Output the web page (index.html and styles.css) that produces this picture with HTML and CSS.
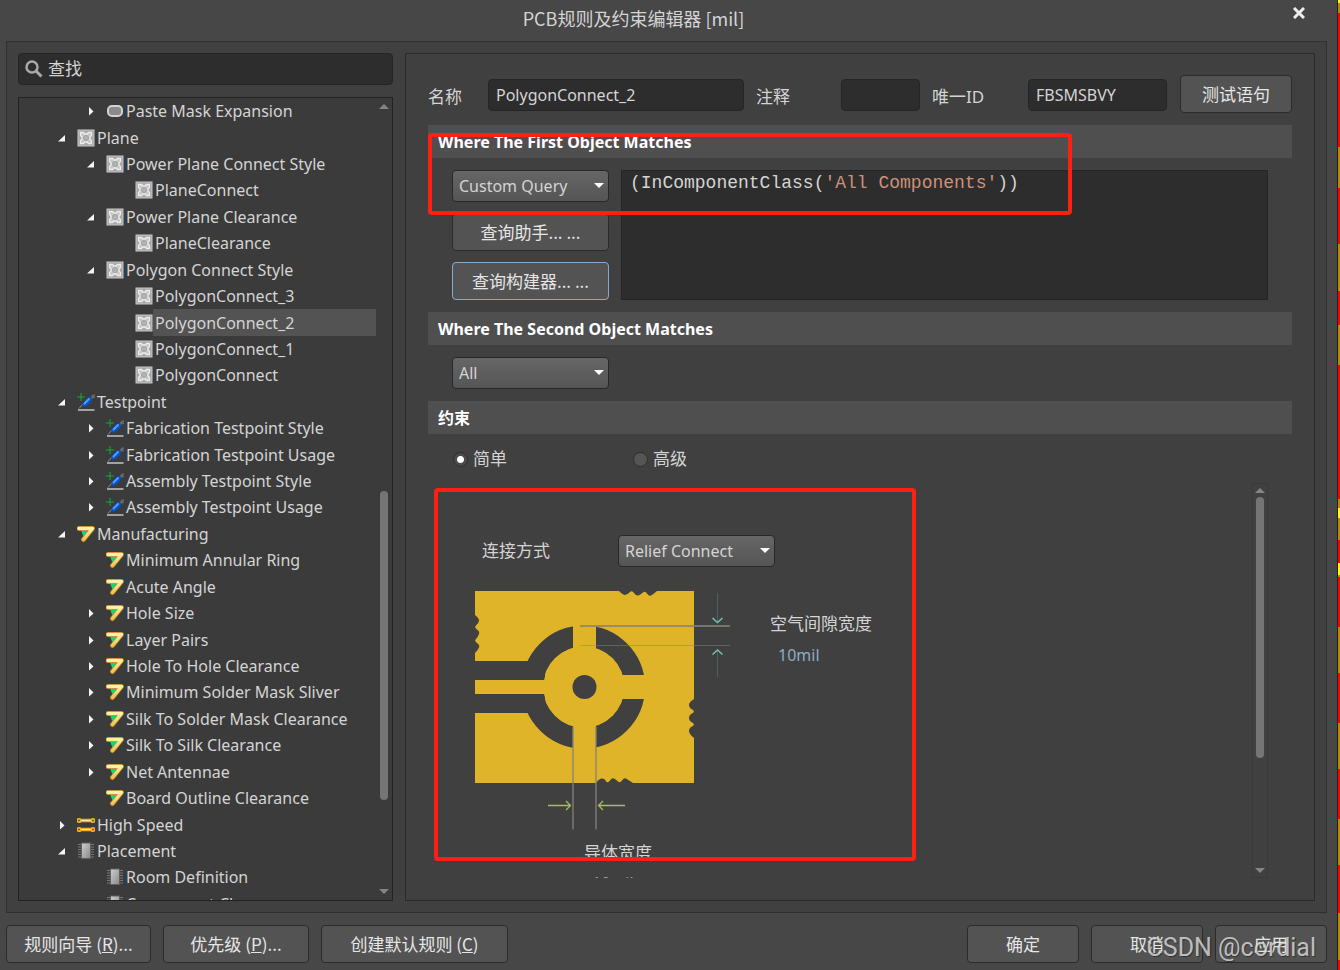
FILE: index.html
```
<!DOCTYPE html>
<html lang="zh-CN">
<head>
    <meta charset="UTF-8">
    <meta name="viewport" content="width=device-width, initial-scale=1.0">
    <title>PCB规则及约束编辑器 [mil]</title>

    <link rel="stylesheet" href="styles.css">
</head>
<body>
    <!-- Icon definitions -->
    <svg class="icon-defs" aria-hidden="true">
        <defs>
            <linearGradient id="chipFill" x1="0" y1="0" x2="1" y2="1">
                <stop offset="0" stop-color="#d0d0d0"/>
                <stop offset="1" stop-color="#888"/>
            </linearGradient>
            <linearGradient id="goldFill" x1="0" y1="0" x2="0" y2="1">
                <stop offset="0" stop-color="#fff2a8"/>
                <stop offset="1" stop-color="#efc558"/>
            </linearGradient>
        </defs>
        <symbol id="i-open" viewBox="0 0 12 12"><path d="M9 3v6.500H2z" fill="#f4f4f4"/></symbol>
        <symbol id="i-closed" viewBox="0 0 12 12"><path d="M4 2l4.500 4.500L4 10.500z" fill="#f4f4f4"/></symbol>
        <symbol id="i-mask" viewBox="0 0 18 18">
            <rect x="2" y="4" width="14" height="10" rx="4" fill="#8a8a8a" stroke="#d2d2d2" stroke-width="2"/>
        </symbol>
        <symbol id="i-plane" viewBox="0 0 18 18">
            <rect x="1" y="1" width="16" height="16" fill="#a8a8a8" stroke="#c8c8c8"/>
            <path d="M3.500 6.500v-3h3L8 5h2l1.500-1.500h3v3L13 8v2l1.500 1.500v3h-3L10 13H8l-1.500 1.500h-3v-3L5 10V8z" fill="#c8c8c8" stroke="#ececec" stroke-width="1.300"/>
            <circle cx="9" cy="9" r="2.500" fill="#b4b4b4" stroke="#a0a0a0"/>
        </symbol>
        <symbol id="i-test" viewBox="0 0 18 18">
            <path d="M14 5l2-2.500 2-.5M15 5l3-1" stroke="#6b6b6b" stroke-width="1.500" fill="none"/>
            <path d="M2 15.500L6 11" stroke="#8f8f8f"/>
            <path d="M5.500 10.500L10.500 5q3-2 4.500 0 .5 2-1.500 4.500l-4 3.500q-3 1-4.500 0z" fill="#0a50c8"/>
            <path d="M7.500 10.500l4.500-4.500" stroke="#48a4ff" stroke-width="2" stroke-linecap="round"/>
            <path d="M4 0v8M0 4h8" stroke="#12ab35" stroke-width="1"/>
            <path d="M1 17h16.500" stroke="#c6c6c6" stroke-width="1.500"/>
        </symbol>
        <symbol id="i-mfg" viewBox="0 0 18 18">
            <path d="M4 5h9l-6.500 7z" fill="#12d873"/>
            <path d="M2 3.500H15.500L6.500 14.500" fill="none" stroke="#b97a1e" stroke-width="5" stroke-linecap="round" stroke-linejoin="round"/>
            <path d="M2 3.500H15.500L6.500 14.500" fill="none" stroke="url(#goldFill)" stroke-width="3.500" stroke-linecap="round" stroke-linejoin="round"/>
            <path d="M5 6h5.500L7 10.500z" fill="#12d873"/>
        </symbol>
        <symbol id="i-speed" viewBox="0 0 18 18">
            <path d="M3 4.500h12M3 13.500h12" stroke="#f0ae22" stroke-width="3.500"/>
            <path d="M3 4.500h12M3 13.500h12" stroke="#ffe994" stroke-width="1"/>
            <g fill="#8a5b0b" stroke="#f5b62d" stroke-width="1.500">
                <circle cx="2" cy="4.500" r="1.800"/><circle cx="16" cy="4.500" r="1.800"/>
                <circle cx="2" cy="13.500" r="1.800"/><circle cx="16" cy="13.500" r="1.800"/>
            </g>
        </symbol>
        <symbol id="i-chip" viewBox="0 0 18 18">
            <path d="M1 2.500h16M1 5h16M1 7.500h16M1 10h16M1 12.500h16M1 15h16" stroke="#777"/>
            <rect x="4.500" y="1" width="9" height="15.500" fill="url(#chipFill)" stroke="#606060"/>
        </symbol>
    </svg>

    <div class="dialog">
        <header class="titlebar">
            <h1>PCB规则及约束编辑器 [mil]</h1>
            <button class="close-btn" aria-label="关闭">
                <svg width="12" height="12" viewBox="0 0 12 12"><path d="M1 1l10 10M11 1L1 11" stroke="#eee" stroke-width="3"/></svg>
            </button>
        </header>

        <main class="frame">
            <aside class="sidebar">
                <label class="search">
                    <svg width="18" height="18" viewBox="0 0 18 18"><circle cx="7" cy="7" r="5.500" fill="none" stroke="#a9a9a9" stroke-width="2.500"/><path d="M11 11l5.500 5.500" stroke="#a9a9a9" stroke-width="3"/></svg>
                    <input type="text" placeholder="查找" aria-label="查找">
                </label>

                <div class="tree">
                    <ul class="tree-list">
                        <li class="level-2"><svg class="arrow"><use href="#i-closed"/></svg><svg class="icon"><use href="#i-mask"/></svg><span>Paste Mask Expansion</span></li>
                        <li class="level-1"><svg class="arrow"><use href="#i-open"/></svg><svg class="icon"><use href="#i-plane"/></svg><span>Plane</span></li>
                        <li class="level-2"><svg class="arrow"><use href="#i-open"/></svg><svg class="icon"><use href="#i-plane"/></svg><span>Power Plane Connect Style</span></li>
                        <li class="level-3"><svg class="arrow"></svg><svg class="icon"><use href="#i-plane"/></svg><span>PlaneConnect</span></li>
                        <li class="level-2"><svg class="arrow"><use href="#i-open"/></svg><svg class="icon"><use href="#i-plane"/></svg><span>Power Plane Clearance</span></li>
                        <li class="level-3"><svg class="arrow"></svg><svg class="icon"><use href="#i-plane"/></svg><span>PlaneClearance</span></li>
                        <li class="level-2"><svg class="arrow"><use href="#i-open"/></svg><svg class="icon"><use href="#i-plane"/></svg><span>Polygon Connect Style</span></li>
                        <li class="level-3"><svg class="arrow"></svg><svg class="icon"><use href="#i-plane"/></svg><span>PolygonConnect_3</span></li>
                        <li class="level-3 selected"><svg class="arrow"></svg><svg class="icon"><use href="#i-plane"/></svg><span>PolygonConnect_2</span></li>
                        <li class="level-3"><svg class="arrow"></svg><svg class="icon"><use href="#i-plane"/></svg><span>PolygonConnect_1</span></li>
                        <li class="level-3"><svg class="arrow"></svg><svg class="icon"><use href="#i-plane"/></svg><span>PolygonConnect</span></li>
                        <li class="level-1"><svg class="arrow"><use href="#i-open"/></svg><svg class="icon"><use href="#i-test"/></svg><span>Testpoint</span></li>
                        <li class="level-2"><svg class="arrow"><use href="#i-closed"/></svg><svg class="icon"><use href="#i-test"/></svg><span>Fabrication Testpoint Style</span></li>
                        <li class="level-2"><svg class="arrow"><use href="#i-closed"/></svg><svg class="icon"><use href="#i-test"/></svg><span>Fabrication Testpoint Usage</span></li>
                        <li class="level-2"><svg class="arrow"><use href="#i-closed"/></svg><svg class="icon"><use href="#i-test"/></svg><span>Assembly Testpoint Style</span></li>
                        <li class="level-2"><svg class="arrow"><use href="#i-closed"/></svg><svg class="icon"><use href="#i-test"/></svg><span>Assembly Testpoint Usage</span></li>
                        <li class="level-1"><svg class="arrow"><use href="#i-open"/></svg><svg class="icon"><use href="#i-mfg"/></svg><span>Manufacturing</span></li>
                        <li class="level-2"><svg class="arrow"></svg><svg class="icon"><use href="#i-mfg"/></svg><span>Minimum Annular Ring</span></li>
                        <li class="level-2"><svg class="arrow"></svg><svg class="icon"><use href="#i-mfg"/></svg><span>Acute Angle</span></li>
                        <li class="level-2"><svg class="arrow"><use href="#i-closed"/></svg><svg class="icon"><use href="#i-mfg"/></svg><span>Hole Size</span></li>
                        <li class="level-2"><svg class="arrow"><use href="#i-closed"/></svg><svg class="icon"><use href="#i-mfg"/></svg><span>Layer Pairs</span></li>
                        <li class="level-2"><svg class="arrow"><use href="#i-closed"/></svg><svg class="icon"><use href="#i-mfg"/></svg><span>Hole To Hole Clearance</span></li>
                        <li class="level-2"><svg class="arrow"><use href="#i-closed"/></svg><svg class="icon"><use href="#i-mfg"/></svg><span>Minimum Solder Mask Sliver</span></li>
                        <li class="level-2"><svg class="arrow"><use href="#i-closed"/></svg><svg class="icon"><use href="#i-mfg"/></svg><span>Silk To Solder Mask Clearance</span></li>
                        <li class="level-2"><svg class="arrow"><use href="#i-closed"/></svg><svg class="icon"><use href="#i-mfg"/></svg><span>Silk To Silk Clearance</span></li>
                        <li class="level-2"><svg class="arrow"><use href="#i-closed"/></svg><svg class="icon"><use href="#i-mfg"/></svg><span>Net Antennae</span></li>
                        <li class="level-2"><svg class="arrow"></svg><svg class="icon"><use href="#i-mfg"/></svg><span>Board Outline Clearance</span></li>
                        <li class="level-1"><svg class="arrow"><use href="#i-closed"/></svg><svg class="icon"><use href="#i-speed"/></svg><span>High Speed</span></li>
                        <li class="level-1"><svg class="arrow"><use href="#i-open"/></svg><svg class="icon"><use href="#i-chip"/></svg><span>Placement</span></li>
                        <li class="level-2"><svg class="arrow"></svg><svg class="icon"><use href="#i-chip"/></svg><span>Room Definition</span></li>
                        <li class="level-2"><svg class="arrow"></svg><svg class="icon"><use href="#i-chip"/></svg><span>Component Clearance</span></li>
                    </ul>
                    <div class="scrollbar">
                        <i class="scroll-up"></i>
                        <div class="track"><div class="thumb" style="top: 49%; height: 40%"></div></div>
                        <i class="scroll-down"></i>
                    </div>
                </div>
            </aside>

            <section class="editor">
                <div class="name-row">
                    <label class="name-label" for="ruleName">名称</label>
                    <input class="field name-field" id="ruleName" type="text" value="PolygonConnect_2">
                    <label class="comment-label" for="comment">注释</label>
                    <input class="field comment-field" id="comment" type="text">
                    <label class="id-label" for="uniqueId">唯一ID</label>
                    <input class="field id-field" id="uniqueId" type="text" value="FBSMSBVY">
                    <button class="btn test-btn">测试语句</button>
                </div>

                <h2>Where The First Object Matches</h2>
                <div class="query-row">
                    <div class="query-buttons">
                        <div class="select">
                            <select aria-label="First object scope"><option>Custom Query</option><option>All</option></select>
                        </div>
                        <button class="btn">查询助手... ...</button>
                        <button class="btn focused">查询构建器... ...</button>
                    </div>
                    <div class="query-text" contenteditable="true" role="textbox" aria-label="Query" spellcheck="false">(InComponentClass(<span class="string">'All Components'</span>))</div>
                </div>

                <h2>Where The Second Object Matches</h2>
                <div class="query-row">
                    <div class="select">
                        <select aria-label="Second object scope"><option>All</option><option>Custom Query</option></select>
                    </div>
                </div>

                <h2>约束</h2>
                <div class="mode-row">
                    <label><input type="radio" name="mode" checked>简单</label>
                    <label><input type="radio" name="mode">高级</label>
                </div>

                <div class="constraints">
                    <div class="constraints-body">
                        <div class="connect-row">
                            <label for="connectStyle">连接方式</label>
                            <div class="select">
                                <select id="connectStyle"><option>Relief Connect</option><option>Direct Connect</option><option>No Connect</option></select>
                            </div>
                        </div>
                        <div class="diagram-row">
                            <svg width="256" height="240" viewBox="0 0 256 240">
                                <rect width="219" height="192" fill="#e0b429"/>
                                <!-- air gap -->
                                <circle cx="108.500" cy="96" r="51" fill="none" stroke="#404040" stroke-width="21"/>
                                <path d="M0 70h70v19H0zM0 103h70v19H0z" fill="#404040"/>
                                <!-- conductors -->
                                <circle cx="109" cy="96" r="40.500" fill="#e0b429"/>
                                <path d="M98 30h23v136H98zM110 84h65v24h-65zM0 89h75v14H0z" fill="#e0b429"/>
                                <circle cx="109.500" cy="96" r="12" fill="#404040"/>
                                <!-- broken edges -->
                                <g fill="#404040">
                                    <path d="M144 0q4 4 6 4t5-3q2-2 4 1t4 2.500 5-3q2-2 4 1t4 2 6-4.500z"/>
                                    <path d="M0 24q4 3 4 5.500t-3 5q-2 2 1 4t2 4.500-3 5q-2 2 1 4t2 4.500T0 62z"/>
                                    <path d="M219 108q-5 3-5 6t4 5q2 2-1 3.500t-3 4.500 4 5q2 2-1 3.500t-3 4.500 5 7z"/>
                                    <path d="M121 192q3-4.500 6-4.500t4 3q2 2 4-1t4-2 4 3q2 2 4-1t4-2 7 4.500z"/>
                                </g>
                                <!-- dimension lines -->
                                <path d="M105 35h150" stroke="#85827a" stroke-width="2" opacity=".8"/>
                                <path d="M105 54.500h150" stroke="#85827a" opacity=".5"/>
                                <path d="M98 136v102.500M121 136v102.500" stroke="#85827a" stroke-width="1.300"/>
                                <path d="M242.500 2v29M242.500 60v26" stroke="#4d605c"/>
                                <path d="M237.500 27l5 4.500 5-4.500M237.500 63.500l5-4.500 5 4.500" fill="none" stroke="#6fc2b4" stroke-width="1.500"/>
                                <path d="M73 214.500h22M91 210l4.500 4.500L91 219M124 214.500h26M128 210l-4.500 4.500L128 219" fill="none" stroke="#a2bd62" stroke-width="1.300"/>
                            </svg>
                            <div class="dimension gap-dimension">
                                <label for="airGap">空气间隙宽度</label>
                                <input id="airGap" type="text" value="10mil">
                            </div>
                        </div>
                        <div class="dimension width-dimension">
                            <label for="conductor">导体宽度</label>
                            <input id="conductor" type="text" value="10mil">
                        </div>
                    </div>
                    <div class="scrollbar framed">
                        <i class="scroll-up"></i>
                        <div class="track"><div class="thumb" style="top: 0; height: 71%"></div></div>
                        <i class="scroll-down"></i>
                    </div>
                </div>

                <div class="mark mark-query"></div>
                <div class="mark mark-connect"></div>
            </section>
        </main>

        <footer class="actions">
            <button class="btn wizard-btn">规则向导 (<u>R</u>)...</button>
            <button class="btn priority-btn">优先级 (<u>P</u>)...</button>
            <button class="btn defaults-btn">创建默认规则 (<u>C</u>)</button>
            <button class="btn ok-btn">确定</button>
            <button class="btn">取消</button>
            <button class="btn">应用</button>
        </footer>
        <div class="watermark">CSDN @cordial</div>
    </div>
    <div class="board-edge"></div>
</body>
</html>
```
FILE: styles.css
```
* {
    box-sizing: border-box;
}

body {
    margin: 0;
    height: 100vh;
    display: flex;
    overflow: hidden;
    background: #474747;
    color: #d4d4d4;
    font-family: "Noto Sans", "Noto Sans CJK SC", sans-serif;
    font-size: 16px;
    line-height: 24px;
}

button, input, select {
    font-family: inherit;
    font-size: inherit;
    line-height: inherit;
    color: inherit;
}

.icon-defs {
    position: absolute;
    width: 0;
    height: 0;
}

.dialog {
    position: relative;
    flex: 1;
    min-width: 0;
    display: flex;
    flex-direction: column;
    border-right: 1px solid #222;
}

/* Slice of the PCB canvas next to the dialog */
.board-edge {
    width: 2px;
    background: linear-gradient(#ff0 0 3px, #b98700 3px 13px, #f00 13px 147px, #b98700 147px 188px,
        #f00 188px 244px, #b98700 244px 291px, #f00 291px 325px, #b98700 325px 365px,
        #f00 365px 499px, #b98700 499px 508px, #ff0 508px 518px, #b98700 518px 540px,
        #f00 540px 563px, #ff0 563px 575px, #b98700 575px 577px, #f00 577px 627px,
        #b98700 627px 673px, #f00 673px 723px, #b98700 723px 769px, #f00 769px 819px,
        #b98700 819px 865px, #f00 865px 913px, #b98700 913px 960px, #f00 960px);
}

.titlebar {
    display: flex;
    height: 41px;
}

.titlebar h1 {
    flex: 1;
    margin: 0;
    padding-top: 6px;
    text-align: center;
    font-family: "Noto Sans CJK SC", sans-serif;
    font-size: 18px;
    font-weight: 400;
}

.close-btn {
    width: 64px;
    height: 25px;
    margin-right: 6px;
    padding: 0;
    border: none;
    background: none;
    cursor: pointer;
}

.close-btn svg {
    display: block;
    margin: 0 auto;
}

.frame {
    flex: 1;
    min-height: 0;
    display: flex;
    gap: 12px;
    margin: 0 10px 0 6px;
    padding: 11px;
    border: 1px solid #303030;
    background: #404040;
}

/* Sidebar */
.sidebar {
    width: 375px;
    display: flex;
    flex-direction: column;
    gap: 12px;
}

.search {
    display: flex;
    align-items: center;
    gap: 5px;
    height: 32px;
    padding: 0 6px;
    border: 1px solid #252525;
    border-radius: 4px;
    background: #2d2d2d;
}

.search input {
    flex: 1;
    padding: 0;
    border: none;
    outline: none;
    background: none;
    font-size: 17px;
}

.search input::placeholder {
    color: #d4d4d4;
    opacity: 1;
}

.tree {
    flex: 1;
    min-height: 0;
    display: flex;
    overflow: hidden;
    border: 1px solid #222;
    background: #3b3b3b;
}

/* the last row runs under the bottom edge */
.tree-list {
    flex: 1;
    display: grid;
    grid-auto-rows: 1fr;
    margin: 0 0 -17px;
    padding: 0;
    list-style: none;
}

.tree-list li {
    display: flex;
    align-items: center;
    font-size: 16px;
    white-space: nowrap;
}

.tree-list span {
    flex: 1;
    padding-left: 2px;
}

.level-1 {
    padding-left: 37px;
}

.level-2 {
    padding-left: 66px;
}

.level-3 {
    padding-left: 95px;
}

.tree-list .selected span {
    align-self: stretch;
    display: flex;
    align-items: center;
    background: #535353;
}

.arrow {
    width: 12px;
    height: 12px;
    margin-right: 9px;
}

.icon {
    width: 18px;
    height: 18px;
}

.scrollbar {
    width: 16px;
    display: flex;
    flex-direction: column;
    align-items: center;
    gap: 4px;
    padding: 6px 0;
}

.scrollbar.framed {
    border: 1px solid #3a3a3a;
    padding: 4px 0;
}

.scroll-up, .scroll-down {
    border: 5px solid transparent;
}

.scroll-up {
    border-top: none;
    border-bottom-color: #858585;
}

.scroll-down {
    border-bottom: none;
    border-top-color: #858585;
}

.track {
    position: relative;
    flex: 1;
    width: 8px;
}

.thumb {
    position: absolute;
    width: 100%;
    border-radius: 4px;
    background: #757575;
}

/* Editor */
.editor {
    position: relative;
    flex: 1;
    min-width: 0;
    display: flex;
    flex-direction: column;
    padding: 21px 22px 22px;
    border: 1px solid #2a2a2a;
}

.name-row {
    display: flex;
    align-items: center;
    height: 40px;
    margin-bottom: 10px;
    font-size: 17px;
}

.name-row label {
    padding-top: 4px;
}

.name-label {
    width: 60px;
}

.comment-label {
    width: 97px;
    padding-left: 12px;
}

.id-label {
    width: 108px;
    padding-left: 12px;
}

.field {
    height: 32px;
    padding: 0 7px;
    border: 1px solid #252525;
    border-radius: 4px;
    background: #2d2d2d;
    font-size: 16px;
}

.name-field {
    flex: 1;
    min-width: 0;
}

.comment-field {
    width: 79px;
}

.id-field {
    width: 139px;
}

.btn {
    height: 38px;
    padding: 0;
    border: 1px solid #2b2b2b;
    border-radius: 4px;
    background: #535353;
    color: #e6e6e6;
    font-family: "Noto Sans CJK SC", sans-serif;
    font-size: 17px;
    cursor: pointer;
}

.btn.focused {
    border-color: #86aace;
}

.test-btn {
    align-self: flex-start;
    width: 112px;
    margin-left: 13px;
}

h2 {
    margin: 0;
    padding: 5px 10px 4px;
    background: #4f4f4f;
    color: #fff;
    font-size: 16px;
    font-weight: 700;
    line-height: 24px;
}

.query-row {
    display: flex;
    gap: 12px;
    padding: 12px 24px;
}

.query-buttons {
    display: flex;
    flex-direction: column;
    gap: 11px;
}

.select {
    position: relative;
    width: 157px;
}

.select select {
    display: block;
    width: 100%;
    height: 32px;
    padding: 0 6px;
    appearance: none;
    border: 1px solid #282828;
    border-radius: 4px;
    background: linear-gradient(#666, #555);
}

.select::after {
    content: "";
    position: absolute;
    right: 5px;
    top: 13px;
    border: 5px solid transparent;
    border-top-color: #fff;
    border-bottom: none;
    pointer-events: none;
}

.query-text {
    flex: 1;
    padding: 0 8px;
    border: 1px solid #252525;
    background: #2d2d2d;
    color: #d4d4d4;
    font-family: "Liberation Mono", monospace;
    font-size: 18px;
}

.query-text .string {
    color: #ce9178;
}

.mode-row {
    display: flex;
    padding: 13px 25px 12px;
    font-size: 17px;
}

.mode-row label {
    display: flex;
    align-items: center;
    gap: 5px;
    width: 180px;
}

.mode-row input {
    width: 15px;
    height: 15px;
    margin: 0;
    appearance: none;
    border: 1px solid #2e2e2e;
    border-radius: 50%;
    background: #555;
}

.mode-row input:checked {
    background: radial-gradient(#fff 0 3px, #4a4a4a 4px);
}

.constraints {
    flex: 1;
    min-height: 0;
    display: flex;
    padding: 0 24px 0 8px;
}

.constraints-body {
    flex: 1;
    overflow: hidden;
    padding: 52px 0 0 39px;
}

.connect-row {
    display: flex;
    align-items: center;
    padding-left: 7px;
    font-size: 17px;
}

.connect-row label {
    width: 136px;
}

.connect-row .select {
    font-size: 16px;
}

.diagram-row {
    display: flex;
    gap: 39px;
    padding-top: 24px;
}

.dimension {
    display: flex;
    flex-direction: column;
    font-size: 17px;
}

.dimension input {
    width: 120px;
    padding: 0 8px;
    border: none;
    background: none;
    color: #8fabc0;
    font-size: 16px;
}

.gap-dimension {
    gap: 7px;
    padding-top: 21px;
}

.width-dimension {
    gap: 6px;
    padding: 10px 0 0 109px;
}

/* Red marker boxes */
.mark {
    position: absolute;
    border: 4px solid #ff2013;
    border-radius: 4px;
    pointer-events: none;
}

.mark-query {
    left: 22px;
    top: 79px;
    width: 644px;
    height: 82px;
}

.mark-connect {
    left: 28px;
    top: 434px;
    width: 482px;
    height: 373px;
}

/* Footer */
.actions {
    display: flex;
    gap: 12px;
    padding: 12px 10px 7px 6px;
}

.actions .btn {
    width: 112px;
}

.actions .wizard-btn {
    width: 145px;
}

.actions .priority-btn {
    width: 146px;
}

.actions .defaults-btn {
    width: 187px;
}

.actions .ok-btn {
    margin-left: auto;
}

.watermark {
    position: absolute;
    right: 21px;
    bottom: 7px;
    color: rgba(225, 225, 225, 0.8);
    font-family: Roboto, sans-serif;
    font-size: 25px;
    line-height: 30px;
    text-shadow: 1px 1px 1px rgba(0, 0, 0, 0.4);
    pointer-events: none;
}
```
